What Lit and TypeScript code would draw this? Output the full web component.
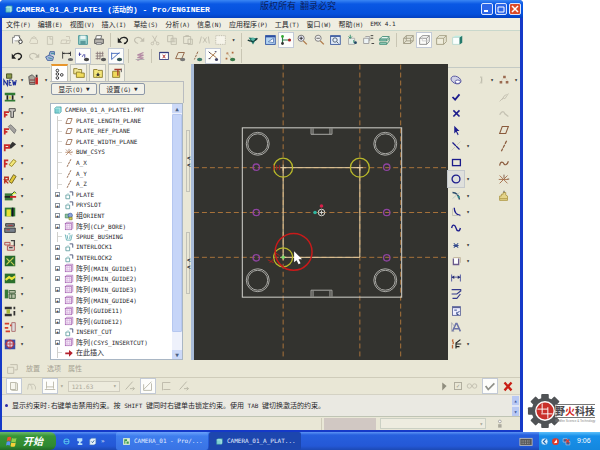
import { LitElement, html, svg, css, nothing } from "lit";
import { customElement, property } from "lit/decorators.js";
import { classMap } from "lit/directives/class-map.js";

const N = "#1c1c8c";
const B = "#8a5a3c";

/* Every glyph is drawn on a 16 x 16 grid. */
const glyphs: Record<string, unknown> = {
  newfile: svg`<path d="M3 12V5h2V3h6v3" fill="#fff" stroke="#777"/><path d="M5 9h5a2 2 0 0 1 0 4" fill="none" stroke="#999"/><circle cx="12" cy="10" r="2" fill="#fff" stroke="#222"/><path d="M10 4l3 4" stroke="#555"/>`,
  opendim: svg`<path d="M3 11l2-5h4l3 2v4H4z M5 6l3-2 3 2" fill="none" stroke="#c9c6b6"/>`,
  pagedim: svg`<path d="M5 4h6v9H5z M8 4v3h3" fill="none" stroke="#c5c2b2"/>`,
  erasedim: svg`<path d="M3 8h6l-1 4H2z M8 4h4v3 M9 9l4-1-1 4H8" fill="none" stroke="#c9c6b6"/>`,
  save: svg`<path d="M3 3h10v10H3z" fill="#9fd3cf" stroke="#3d8f92"/><path d="M5 3h6v4H5z" fill="#e8f6f4"/><path d="M5 9h6v4H5z" fill="#5a9a9c"/>`,
  print: svg`<path d="M5 3h6l-1 4H4z" fill="#fff" stroke="#666"/><path d="M3 7h10v5H3z" fill="#b5b2ac" stroke="#555"/><path d="M5 11h6v2H5z" fill="#ddd" stroke="#777"/>`,
  undo: svg`<path d="M4 8c3-5 10-3 9 1-1 2-2 3-4 3" fill="none" stroke="#222" stroke-width="1.6"/><path d="M2 5v6h5z" fill="#222"/>`,
  redo: svg`<path d="M12 8C9 3 2 5 3 9c1 2 2 3 4 3" fill="none" stroke="#c2bfb0" stroke-width="1.3"/><path d="M14 5v5H9z" fill="#c2bfb0"/>`,
  cut: svg`<path d="M5 3l5 8M10 3L6 11" stroke="#c0bdae"/><circle cx="5" cy="12" r="1.5" fill="none" stroke="#c0bdae"/><circle cx="11" cy="12" r="1.5" fill="none" stroke="#c0bdae"/>`,
  copy: svg`<path d="M3 3h6v7H3z M7 6h6v7H7z M9 8h3M9 10h3" fill="none" stroke="#bdbaab"/>`,
  paste: svg`<path d="M3 4h8v8H3z M8 7h5v6H8z M5 3h4" fill="none" stroke="#bdbaab"/>`,
  regen: svg`<path d="M5 4L3 12M7 5l4 6M11 5l-4 6M13 4l1 8" stroke="#bdbaab" fill="none"/>`,
  select: svg`<rect x="2" y="3" width="11" height="10" fill="#f6f4ea" stroke="#b4b1a2" stroke-dasharray="1 1"/>`,
  spin: svg`<path d="M3 5l9 1-4 7z" fill="#1f7a6d"/><path d="M2 8c3 2 8 2 11-2" stroke="#133" fill="none" stroke-width="1.5"/><circle cx="8" cy="7" r="2" fill="#57b6a5"/>`,
  repaint: svg`<rect x="3" y="3" width="11" height="10" fill="#b4d5f2" stroke="#2b4fa0"/><path d="M3 4h11" stroke="#2b4fa0" stroke-width="2"/><path d="M6 10l6-4v5z" fill="#fff" stroke="#5f7fb6"/>`,
  csyson: svg`<path d="M4 4v8M4 8h7" stroke="#2d7a4a" stroke-width="1.3"/><circle cx="4" cy="4" r="1.6" fill="#3a3"/><circle cx="4" cy="12" r="1.6" fill="#333"/><circle cx="12" cy="8" r="1.8" fill="#a22"/>`,
  zoomin: svg`<circle cx="7" cy="6" r="3.5" fill="#eef" stroke="#666"/><path d="M9.500 9l4 4" stroke="#b07a4a" stroke-width="1.6"/><path d="M5 6h4M7 4v4" stroke="#222"/>`,
  zoomout: svg`<circle cx="7" cy="6" r="3.500" fill="#eee" stroke="#777"/><path d="M9.500 9l4 4" stroke="#b07a4a" stroke-width="1.6"/><path d="M5 6h4" stroke="#555"/>`,
  refit: svg`<rect x="3" y="3" width="11" height="10" fill="#e5eefa" stroke="#34549c"/><path d="M3 4h11" stroke="#34549c"/><circle cx="8" cy="8" r="2.500" fill="none" stroke="#456"/><path d="M10 10l2 2" stroke="#456"/>`,
  reorient: svg`<path d="M4 6h7v7H4z" fill="#e3f0ea" stroke="#aaa"/><path d="M6 2v4M4 4l2 2 2-2M10 8v3h3" stroke="#2a8a6a" fill="none"/><circle cx="12" cy="11" r="1.500" fill="#246"/>`,
  viewlist: svg`<path d="M3 6h6v6H3z M5 4h5v5" fill="#edf4f6" stroke="#999"/><path d="M11 3h3M11 6h3M12 12h3" stroke="#333"/>`,
  layers: svg`<path d="M3 7l3-3h8l-3 3z" fill="#e4f6ee" stroke="#468e79"/><path d="M3 7h8v2H3zM3 11h8v2H3z" fill="#9fd8c4" stroke="#468e79"/><path d="M11 9l3-3M11 13l3-4V5" fill="none" stroke="#468e79"/>`,
  wire: svg`<path d="M3 6h8v6H3z M3 6l3-3h8l-3 3 M14 3v6l-3 3 M6 3v6h8 M6 9l-3 3" fill="none" stroke="#9b9780"/>`,
  hidden: svg`<path d="M3 6h8v7H3z M3 6l3-3h8l-3 3 M14 3v7l-3 3" fill="none" stroke="#888"/><path d="M6 3v6h8" fill="none" stroke="#ccc"/>`,
  nohidden: svg`<path d="M3 6h8v7H3z M3 6l3-3h8l-3 3 M14 3v7l-3 3" fill="#efeddc" stroke="#a09a7e"/>`,
  shaded: svg`<path d="M3 5l3-2h8l-3 2z" fill="#bfeee4"/><path d="M3 5h8v8H3z" fill="#fafffe" stroke="#b8d8d0"/><path d="M11 5l3-2v8l-3 2z" fill="#247a6c"/>`,
  teapot: svg`<path d="M3 9l4-2 5 2-1 4H5z M7 7l1-4h5v4" fill="#a8b8dc" stroke="#3f5f9c"/><path d="M9 5h4M6 10l4 1" stroke="#2f8a8a"/>`,
  dimson: svg`<path d="M3 3v8M12 3v5M3 5h9" stroke="#333" fill="none"/><path d="M3 5l2-1v2zM12 5l-2-1v2z" fill="#222"/><ellipse cx="12" cy="12" rx="3" ry="1.800" fill="#666"/>`,
  constr: svg`<path d="M4 4v4M3 6h3M7 9l2-3M10 6v4" stroke="#3a3a9c"/><ellipse cx="12" cy="12" rx="3" ry="2" fill="#444"/>`,
  gridon: svg`<path d="M3 5h9M3 8h9M3 11h5M5 3v9M8 3v9M11 3v5" stroke="#8a7a7a" fill="none"/><ellipse cx="12" cy="12" rx="3" ry="2" fill="#555"/>`,
  verton: svg`<path d="M3 4v8M3 12l9-8M3 5h9" stroke="#3a62b8" fill="none"/><ellipse cx="12" cy="12" rx="3" ry="2" fill="#355"/>`,
  stack: svg`<path d="M12 4L5 7h7L5 10h7l-7 3" fill="none" stroke="#b48aa4" stroke-width="1.300"/><path d="M3 12h10" stroke="#aaa"/>`,
  cross: svg`<rect x="3" y="4" width="10" height="8" fill="#fff" stroke="#333a7c"/><path d="M3 4h10" stroke="#333a7c" stroke-width="1.500"/><path d="M6.500 6.500l3 4M9.500 6.500l-3 4" stroke="#a22"/>`,
  planeon: svg`<path d="M6 4h7l-3 7H3z" fill="none" stroke="${B}"/><ellipse cx="11" cy="12" rx="3" ry="2" fill="#777"/>`,
  axison: svg`<path d="M9 3L5 12" stroke="${B}" stroke-dasharray="3 1"/><ellipse cx="11" cy="12" rx="3" ry="2" fill="#3a7a6a"/>`,
  pointon: svg`<path d="M4 4l8 6M11 4L4 11" stroke="#a06a3a"/><path d="M3 3l2 2M10 3h2M3 11h2" stroke="#335"/><circle cx="12" cy="12" r="1.800" fill="#446"/>`,
  csyspts: svg`<path d="M4 4h2v2H4zM10 3h2v2h-2zM3 10h2v2H3z" fill="#b0683c"/><path d="M5 5l5 6" stroke="#cb9"/><ellipse cx="11" cy="12" rx="3" ry="2" fill="#3a7a4a"/>`,

  ellip: svg`<ellipse cx="8" cy="8" rx="6" ry="4" transform="rotate(25 8 8)" fill="#cfd0e4" stroke="#5757a0"/><ellipse cx="10" cy="10" rx="3" ry="2" fill="#fff" stroke="#5757a0"/>`,
  done: svg`<path d="M4 8l3 3 5-6" fill="none" stroke="${N}" stroke-width="2"/>`,
  quit: svg`<path d="M5 5l7 7M12 5l-7 7" stroke="${N}" stroke-width="1.800"/>`,
  arrow: svg`<path d="M6 3v9l2-2 2 4 1-1-2-4h3z" fill="${N}"/>`,
  line: svg`<path d="M4 4l8 8" stroke="${N}" stroke-width="1.500"/><path d="M13 3L3 13" stroke="#c5c5b8"/>`,
  rect: svg`<rect x="4" y="4" width="9" height="7" fill="none" stroke="${N}" stroke-width="1.500"/>`,
  circle: svg`<circle cx="8" cy="8" r="4.500" fill="none" stroke="${N}" stroke-width="1.500"/>`,
  arc: svg`<path d="M4 4c4 0 7 3 8 8" stroke="#2a4a6c" stroke-width="1.600" fill="none"/><path d="M4 11l8-7" stroke="#b5c5c0"/><circle cx="11" cy="9" r="1.200" fill="#2a8a8a"/>`,
  fillet: svg`<path d="M6 3c0 5 2 8 7 9" stroke="${N}" stroke-width="1.500" fill="none"/><path d="M4 4v8h8" stroke="#c0c0b4" fill="none"/>`,
  spline: svg`<path d="M3 8c1-5 4-4 5 0s4 5 5 0" stroke="${N}" stroke-width="1.500" fill="none"/>`,
  point: svg`<path d="M5.500 6l5 5M10.500 6l-5 5M5 8.500h6" stroke="#334a8c" stroke-width="1.200"/>`,
  edge: svg`<path d="M5 5v7h6V5" fill="#fff" stroke="#6a5a8c" stroke-width="1.500"/><path d="M5 4h8v6" fill="none" stroke="#c0b49a"/>`,
  dim: svg`<path d="M3 4v8M13 4v8M3 7h10" stroke="#444a9c"/><path d="M3 7l3-2v4zM13 7l-3-2v4z" fill="#222a6c"/>`,
  modify: svg`<path d="M3 3h11M3 8h6l5-4M4 13h5l4-5" fill="none" stroke="#33398c" stroke-width="1.300"/>`,
  constrain: svg`<rect x="4" y="3" width="9" height="10" fill="#eef" stroke="#5a6298"/><path d="M4 4h9" stroke="#5a6298" stroke-width="1.500"/><path d="M6 7h3M9 11l3-3M9 9v3h2" stroke="#223a7c" fill="none"/>`,
  text: svg`<path d="M4 13L8 4h1l4 9M6 10h5" fill="none" stroke="#6a72a8" stroke-width="1.800"/><path d="M3 3v10h3M3 3l3 4" fill="none" stroke="#a9a9b4"/>`,
  trim: svg`<path d="M5 3c-3 1 2 4-1 5M4 9v4" stroke="#c06a3a" stroke-width="1.500" fill="none"/><path d="M8 13V7l5-4M8 8h6M8 11h4" stroke="#222" stroke-width="1.300" fill="none"/>`,
  dimcurve: svg`<path d="M8 4c3 2 2 6 0 8M10 4v8" stroke="#bdbaab" fill="none"/>`,
  points: svg`<path d="M7 3h3v3H7zM3 9h3v3H3zM10 9h3v3h-3z" fill="#9a6a50"/><path d="M7 6l-2 3M10 6l2 3" stroke="#dcb"/>`,
  dimaxis: svg`<path d="M3 13l4-4 2 1 4-6M6 11l2-4 3-2" stroke="#c0bdae" fill="none"/>`,
  dimwave: svg`<path d="M3 10c3-5 5-4 6-1l4 3" stroke="#c5c2b3" fill="none" stroke-width="1.500"/>`,
  plane: svg`<path d="M6 4h7l-3 8H3z" fill="none" stroke="${B}" stroke-width="1.200"/>`,
  axis: svg`<path d="M11 2L5 14" stroke="${B}" stroke-width="1.400" stroke-dasharray="4 1"/>`,
  curve: svg`<path d="M3 11c1-6 4-4 5-2s4 1 5-3" stroke="${B}" stroke-width="1.300" fill="none"/>`,
  csys: svg`<path d="M3 4l9 9M12 4l-9 9M2 8.500h11" stroke="#a06844"/><path d="M8 3v4M12 8h2" stroke="#754"/>`,
  analysis: svg`<path d="M3 8h2V6h2V4h3v3l2 1v5H3z" fill="#e4d48a" stroke="#b09a4a"/><path d="M3 11h9" stroke="#b09a4a"/><path d="M8 2v2" stroke="#444"/>`,

  part: svg`<path d="M3 5l2-2h8v8l-2 2H3z" fill="#7ed1d3" stroke="#39959c"/><path d="M3 5h8v8" fill="none" stroke="#d5f3f2"/>`,
  feature: svg`<path d="M3 8h6v6H3z" fill="none" stroke="#5a9a9c" stroke-width="1.300"/><path d="M9 3h5v6" fill="none" stroke="#555f80" stroke-width="1.600"/><path d="M5 6h3" stroke="#9cc"/>`,
  group: svg`<path d="M2 5h6v6H2z" fill="#8fc2a0" stroke="#357a52"/><circle cx="10" cy="7" r="3.500" fill="#8ca4dc" stroke="#33549c"/><path d="M8 10h5v4H8z" fill="#d7cf52" stroke="#777520"/>`,
  pattern: svg`<rect x="2" y="4" width="10" height="10" fill="#f6e9f8" stroke="#9a4ea8"/><path d="M2 4l2-2h10v10l-2 2" fill="none" stroke="#9a4ea8"/><path d="M5 4v10M9 4v10M2 7h10M2 11h10" stroke="#d4b0dc"/>`,
  bushing: svg`<path d="M2 4l2 9h7l2-9M5 5l1 6M10 5l-1 6M7 3h3" fill="none" stroke="#55a8ac" stroke-width="1.300"/>`,
  insert: svg`<path d="M2 7h6V3l6 5-6 6v-4H2z" fill="#b3202c"/>`,

  treetab: svg`<circle cx="5" cy="4" r="1.500" fill="#fff" stroke="#222"/><circle cx="5" cy="8" r="1.500" fill="#fff" stroke="#222"/><circle cx="5" cy="12.500" r="1.500" fill="#fff" stroke="#222"/><circle cx="10" cy="9" r="1.500" fill="#fff" stroke="#222"/>`,
  folders: svg`<path d="M2 3h4l1 1h4v5H2z" fill="#f3e89a" stroke="#8a7a2a"/><path d="M5 7h4l1 1h4v5H5z" fill="#f0dc5c" stroke="#8a7a2a"/>`,
  favs: svg`<path d="M3 4h4l1 1h5v8H3z" fill="#f5e77a" stroke="#8a7a2a"/><path d="M8 7l1 2h2l-2 1 1 2-2-1-2 1 1-2-2-1h2z" fill="#333"/>`,
  conn: svg`<path d="M3 6h8v7H3z" fill="#f1d95c" stroke="#8a7a2a"/><path d="M5 4h8M9 4v7" stroke="#a33a2a" stroke-width="1.500" fill="none"/><path d="M13 3v4" stroke="#555"/>`,

  emxnew: svg`<path d="M4 1h6v5H4z" fill="#8a9a4a" stroke="#444c20"/><path d="M1 14V8l4 6V8M7 8h3M7 11h2M7 14h3M7 8v6M11 8l1 6 1-4 1 4 1-6" stroke="#20309a" stroke-width="1.300" fill="none"/>`,
  emxcomp: svg`<path d="M2 4l4-2 3 3v8H3z" fill="#a9a59a" stroke="#555"/><path d="M11 5v8" stroke="#c22" stroke-width="3"/><path d="M11 2v3" stroke="#333" stroke-width="2"/><path d="M3 8h6M3 11h6" stroke="#733"/>`,
  emxbase: svg`<path d="M2 3h12v3H2zM2 11h12v2H2z" fill="#2f7a34"/><path d="M4 6h2v5H4zM10 6h2v5h-2z" fill="#222"/><path d="M7 7h2v3H7z" fill="#d6d23a"/>`,
  emxscrew: svg`<path d="M7 3h7v3h-2v7h-3V6H7z" fill="#c9c6c2" stroke="#444"/><path d="M2 13V7h5M2 10h3" stroke="#c82a2a" stroke-width="2" fill="none"/>`,
  emxpin: svg`<path d="M6 4l3-2 6 6-2 4z" fill="#a5a3a0" stroke="#777"/><path d="M2 13V7h5M2 10h3" stroke="#c82a2a" stroke-width="2" fill="none"/>`,
  emxbolt: svg`<path d="M6 9l5-6 4 3-6 5z" fill="#333"/><path d="M2 14V7h5v3H3" stroke="#c82a2a" stroke-width="2" fill="none"/>`,
  emxpenc: svg`<path d="M7 10l5-6 3 2-5 6z" fill="#f2e77a" stroke="#94811c"/><path d="M2 13V5h4M2 9h3" stroke="#c82a2a" stroke-width="2" fill="none"/>`,
  emxedit: svg`<path d="M7 11l5-8 3 2-5 8z" fill="#e2c83a" stroke="#6a5a1a"/><path d="M2 13V6h4v3H2l4 4" stroke="#b83020" stroke-width="1.600" fill="none"/>`,
  emxplate: svg`<path d="M2 5h9v8H2z" fill="#3a7a3a"/><path d="M8 8h7v2H8z" fill="#c22"/><path d="M9 7l4-4 2 2" fill="#df4" stroke="#242"/><path d="M2 9h6" stroke="#222" stroke-width="2"/>`,
  emxcool: svg`<path d="M2 3h12v10H2z" fill="#2f7a34"/><path d="M4 5h5v8H4z" fill="#e6e235"/><path d="M11 3v10" stroke="#112" stroke-width="2"/>`,
  emxmold: svg`<path d="M3 3h10v3H3zM2 8h12v5H2z" fill="#77808c" stroke="#333"/><path d="M4 10h4M6 5h5" stroke="#b33"/>`,
  emxejec: svg`<path d="M2 5h6v3H2zM5 9h8v5H5z" fill="#ddd6d0" stroke="#a44"/><path d="M9 3h4v6M7 11h4" stroke="#444" stroke-width="1.500" fill="none"/>`,
  emxslide: svg`<rect x="2" y="2" width="12" height="12" fill="#256a2a"/><path d="M4 12L12 4M4 5l3 3M9 9l4 4" stroke="#c9cf5a" stroke-width="1.300"/>`,
  emxlift: svg`<rect x="2" y="3" width="12" height="11" fill="#2b702e"/><path d="M3 10l4-3 3 2 4-3" stroke="#eae43c" stroke-width="2.500" fill="none"/>`,
  emxlatch: svg`<path d="M2 3h4v10H2z" fill="#357a38"/><path d="M7 4h7v3H7zM7 8h7v5H7z" fill="#b9c3a9" stroke="#3a5a38"/><path d="M10 8v5" stroke="#3a5a38"/>`,
  emxspec: svg`<path d="M2 3h8v3H2zM2 11h8v3H2z" fill="#333"/><path d="M4 6h4v5H4z" fill="#a5b83a"/><path d="M13 3v3M13 8v5" stroke="#333" stroke-width="2"/>`,
  emxdots: svg`<path d="M2 4h5M2 9h4M3 13h5M8 6h3" stroke="#d3402c" stroke-width="2"/><path d="M10 3h4v10h-4z" fill="#ddd" stroke="#a66"/>`,
  emxgear: svg`<rect x="2" y="3" width="12" height="11" fill="#3a4aa8"/><circle cx="8" cy="8" r="4" fill="#e0d4e4" stroke="#b03a4a" stroke-width="1.500"/><path d="M8 3v11M2 8h12" stroke="#b03a4a"/>`,

  place: svg`<path d="M3 6h7v7H3zM6 3h8v6h-3" fill="none" stroke="#bbb8a8"/>`,
  solid: svg`<path d="M4 4h6v8H4zM10 4l2 1v8H6l-2-1" fill="#f7f6ee" stroke="#b5b2a4"/>`,
  surf: svg`<path d="M3 12l1-6h6l2 3v3M5 6c3 1 3 4 3 6" fill="none" stroke="#c5c2b3"/>`,
  depth: svg`<path d="M4 3v8M12 3v8M2 12h12M4 9h8" fill="none" stroke="#bab7a8"/>`,
  flip: svg`<path d="M3 12l8-9M8 11h5M11 9l2 2-2 2" fill="none" stroke="#b5b2a4"/>`,
  remove: svg`<path d="M3 12L12 3M3 6v7h9V5" fill="none" stroke="#b5b2a4"/>`,
  thicken: svg`<path d="M4 13V4h9M5 12h8" fill="none" stroke="#bab7a8"/>`,
  play: svg`<path d="M6 4l5 4-5 5z" fill="#8f8d7e"/>`,
  glasses: svg`<circle cx="5" cy="8" r="2.500" fill="none" stroke="#c0bdae"/><circle cx="11" cy="8" r="2.500" fill="none" stroke="#c0bdae"/>`,
  okdim: svg`<path d="M3 8l3 4 7-7" fill="none" stroke="#8f9088" stroke-width="2"/>`,
  cancel: svg`<path d="M4 4l8 9M12 4l-8 9" stroke="#c81e14" stroke-width="2.600"/>`,
  lamp: svg`<path d="M6 9h5v5H6z" fill="#aaa89c"/><circle cx="8.500" cy="5" r="2" fill="#fff" stroke="#888"/>`,

  ie: svg`<circle cx="8" cy="8" r="4.500" fill="none" stroke="#4cc3ee" stroke-width="1.800"/><path d="M4 8h8" stroke="#8ee0fa"/>`,
  desk: svg`<path d="M4 2h9v5l-3 2v2h3v3H5v-3h2V8L4 7z" fill="#b8e0fa"/>`,
  media: svg`<path d="M3 5l3-3h8v9l-3 3H3z" fill="#e7f2fb" stroke="#4f7fb4"/><path d="M6 8l2 2 3-4" stroke="#258" fill="none" stroke-width="1.500"/>`,
  proe: svg`<rect x="2" y="2" width="12" height="12" fill="#dff0d0"/><path d="M4 4h5v3H6v5H4zM8 8h4v4H8z" fill="#3d9850"/>`,
  keyb: svg`<rect x="1" y="5" width="14" height="8" fill="#555" stroke="#bbb"/><path d="M3 8h10M3 10.500h10" stroke="#ccc" stroke-dasharray="1 1"/>`,
  expand: svg`<circle cx="8" cy="8" r="6" fill="#dcf2fd" stroke="#2a8ad8"/><path d="M10 4L6 8l4 4" fill="none" stroke="#1565b5" stroke-width="2"/>`,
  shield: svg`<rect x="2" y="2" width="12" height="12" rx="5" fill="#dc3c2c"/><path d="M5 11l5-7 1 6z" fill="#fff"/>`,
  net: svg`<path d="M2 3h7v6H2zM7 8h7v6H7z" fill="#4a5a8c" stroke="#c5d8f0"/><path d="M7 4l6 6M13 4l-6 6" stroke="#e23c2c" stroke-width="2"/>`,
};

const glyph = (name: string) =>
  html`<svg class="glyph" viewBox="0 0 16 16" aria-hidden="true">${glyphs[name]}</svg>`;

/* Chinese runs are set one step larger than the Latin beside them. */
const mixed = (s: string) =>
  s
    .split(/([\u3000-\u9fff]+)/)
    .filter(Boolean)
    .map((r) => (/[\u3000-\u9fff]/.test(r) ? html`<span class="han">${r}</span>` : r));

const base = css`
  * { box-sizing: border-box; }
  :host {
    display: block;
    font: 6px/10px "DejaVu Sans Mono", "Noto Sans CJK SC", monospace;
    color: #26262a;
  }
  button, select, input {
    font: inherit; color: inherit; margin: 0; padding: 0;
    border: 0; border-radius: 0; background: none;
  }
  .han { font-family: "Noto Sans CJK SC", sans-serif; font-size: 7px; }
  .glyph { display: block; width: 14px; height: 14px; flex: none; overflow: visible; }
`;

@customElement("tool-button")
class ToolButton extends LitElement {
  @property() icon = "";
  @property({ type: Boolean }) on = false;
  static styles = [
    base,
    css`
      :host { display: flex; justify-content: center; min-width: 0; height: 16px; }
      button { display: grid; place-items: center; width: 16px; height: 16px; }
      .on { background: #fdfdfb; border: 1px solid #c3cad6; }
    `,
  ];
  render() {
    return html`<button class=${classMap({ on: this.on })} aria-label=${this.icon}>${glyph(this.icon)}</button>`;
  }
}

@customElement("top-toolbars")
class TopToolbars extends LitElement {
  static styles = [
    base,
    css`
      :host { background: #e9e7d6; padding: 1px 55px 0 7px; border-top: 1px solid #c9d8cc; }
      .bar { display: flex; align-items: center; height: 16px; }
      .short { max-width: 236px; }
      tool-button { flex: 1; }
      .sep { width: 1px; height: 14px; margin: 0 3px; background: #c9c6b4; }
      .dot { width: 9px; text-align: center; }
    `,
  ];
  static rows = [
    "newfile opendim pagedim erasedim save print | undo redo cut copy paste regen select . | spin repaint csyson! zoomin zoomout refit reorient viewlist layers | wire hidden! nohidden shaded",
    "undo redo teapot dimson constr! gridon verton! | stack | cross planeon axison pointon! csyspts |",
  ];
  item(s: string) {
    if (s === "|") return html`<span class="sep"></span>`;
    if (s === ".") return html`<span class="dot">▾</span>`;
    return html`<tool-button icon=${s.replace("!", "")} ?on=${s.endsWith("!")}></tool-button>`;
  }
  render() {
    return TopToolbars.rows.map(
      (r, i) => html`<div class=${classMap({ bar: true, short: i === 1 })}>${r.split(" ").map((s) => this.item(s))}</div>`,
    );
  }
}

@customElement("side-toolbar")
class SideToolbar extends LitElement {
  @property() items = "";
  static styles = [
    base,
    css`
      :host { display: grid; grid-template-rows: repeat(17, 1fr); padding: 4px 0 8px; }
      .row { display: flex; align-items: center; min-height: 0; }
      .more { width: 8px; text-align: center; }
      .blank { width: 24px; }
      .on { background: #dfe0dc; outline: 1px solid #c4c8cc; }
    `,
  ];
  render() {
    return this.items.split(" ").map(
      (row) => html`<div class="row">
        ${row.split("/").map((s) =>
          s
            ? html`<tool-button class=${classMap({ on: s.endsWith("!") })} icon=${s.replace(/[.!]/g, "")}></tool-button>
                ${s.includes(".") ? html`<span class="more">▾</span>` : nothing}`
            : html`<span class="blank"></span>`,
        )}
      </div>`,
    );
  }
}

type Node = [icon: string, label: string, depth: number, closed?: boolean];

@customElement("model-tree")
class ModelTree extends LitElement {
  static nodes: Node[] = [
    ["part", "CAMERA_01_A_PLATE1.PRT", 0],
    ["plane", "PLATE_LENGTH_PLANE", 1],
    ["plane", "PLATE_REF_PLANE", 1],
    ["plane", "PLATE_WIDTH_PLANE", 1],
    ["csys", "BUW_CSYS", 1],
    ["axis", "A_X", 1],
    ["axis", "A_Y", 1],
    ["axis", "A_Z", 1],
    ["feature", "PLATE", 1, true],
    ["feature", "PRYSLOT", 1, true],
    ["group", "组ORIENT", 1, true],
    ["pattern", "阵列(CLP_BORE)", 1, true],
    ["bushing", "SPRUE_BUSHING", 1],
    ["feature", "INTERLOCK1", 1, true],
    ["feature", "INTERLOCK2", 1, true],
    ["pattern", "阵列(MAIN_GUIDE1)", 1, true],
    ["pattern", "阵列(MAIN_GUIDE2)", 1, true],
    ["pattern", "阵列(MAIN_GUIDE3)", 1, true],
    ["pattern", "阵列(MAIN_GUIDE4)", 1, true],
    ["pattern", "阵列(GUIDE11)", 1, true],
    ["pattern", "阵列(GUIDE12)", 1, true],
    ["feature", "INSERT_CUT", 1, true],
    ["pattern", "阵列(CSYS_INSERTCUT)", 1, true],
    ["insert", "在此插入", 1],
  ];
  static styles = [
    base,
    css`
      :host { display: flex; flex-direction: column; }
      .tabs { display: flex; gap: 2px; height: 17px; padding-left: 1px; flex: none; }
      .tab { display: grid; place-items: center; width: 17px; background: #f3f1e4; border: 1px solid #c2c4bc; border-bottom: 0; }
      .current { background: #fff; border-top: 2px solid #e8962c; }
      .head { display: flex; gap: 2px; padding: 1px; height: 22px; border-top: 1px solid #b9bcc0; border-right: 1px solid #b9bcc0; align-items: flex-start; flex: none; }
      .menu { display: flex; align-items: center; justify-content: center; gap: 3px; width: 46px; height: 12px; background: #f2f1e9; border: 1px solid #8d98a8; border-radius: 2px; }
      .body { flex: 1; display: flex; background: #fff; border: 1px solid #a9b6c4; margin-right: 1px; }
      .list { flex: 1; min-width: 0; display: grid; grid-template-rows: repeat(24, 1fr); margin: 0; padding: 1px 0; list-style: none; line-height: 8px; }
      .node { display: flex; align-items: center; gap: 2px; white-space: nowrap; padding-left: 2px; }
      .node .glyph { width: 10px; height: 10px; }
      .child { padding-left: 4px; }
      .stem { display: flex; align-items: center; align-self: stretch; width: 7px; flex: none; }
      .leaf { width: 5px; margin-left: 2px; border-left: 1px solid #d0d0cc; }
      .leaf::after { content: ""; width: 5px; border-top: 1px solid #d8d8d4; }
      .box { display: grid; place-items: center; width: 5px; height: 5px; border: 1px solid #8d96a0; font: 5px/5px "DejaVu Sans Mono", monospace; color: #000; }
      .bar { width: 10px; display: flex; flex-direction: column; background: #eef1fb; }
      .arrow { height: 9px; display: grid; place-items: center; background: #ccd9f8; color: #4d6185; }
      .thumb { flex: 1; margin: 1px 0 18px; background: #c6d5f8; border: 1px solid #b5c7f0; border-radius: 1px; }
    `,
  ];
  render() {
    return html`
      <div class="tabs" role="tablist">
        ${["treetab", "folders", "favs", "conn"].map(
          (t, i) => html`<button class=${classMap({ tab: true, current: i === 0 })} role="tab" aria-label=${t}>${glyph(t)}</button>`,
        )}
      </div>
      <div class="head">
        <button class="menu"><span>${mixed("显示(O)")}</span><span>▼</span></button>
        <button class="menu"><span>${mixed("设置(G)")}</span><span>▼</span></button>
      </div>
      <div class="body">
        <ul class="list">
          ${ModelTree.nodes.map(
            ([icon, label, depth, closed]) => html`<li class=${classMap({ node: true, child: depth > 0 })}>
              ${depth
                ? html`<span class=${classMap({ stem: true, leaf: !closed })}>${closed ? html`<span class="box">+</span>` : nothing}</span>`
                : nothing}
              ${glyph(icon)}<span>${mixed(label)}</span>
            </li>`,
          )}
        </ul>
        <div class="bar"><span class="arrow">▲</span><span class="thumb"></span><span class="arrow">▼</span></div>
      </div>
    `;
  }
}

@customElement("sketch-view")
class SketchView extends LitElement {
  static styles = css`
    :host { display: flex; background: #33332f; overflow: hidden; }
    svg { flex: 1; min-width: 0; }
    .datum { stroke: #a8733a; stroke-dasharray: 5 3; fill: none; }
    .solid { stroke: #d4d4ce; fill: none; }
    .bore { stroke: #a9a9a5; fill: none; }
    .sketch { stroke: #ead2a4; fill: none; }
    .circle { stroke: #b9b92a; fill: none; stroke-width: 1.3; }
    .hole { stroke: #8e44a0; fill: none; stroke-width: 1.3; }
    .live { stroke: #c81a1a; fill: none; stroke-width: 1.5; }
    .hint { stroke: #a8201c; fill: none; }
  `;
  render() {
    return html`<svg viewBox="194 64 255 296" role="img" aria-label="PLATE">
      ${[283.5, 360.5, 401.5].map((x) => svg`<path class="datum" d="M${x} 64V360" />`)}
      ${[167.5, 212.5, 257.5].map((y) => svg`<path class="datum" d="M194 ${y}H449" />`)}
      <rect class="solid" x="242.5" y="127.5" width="160" height="170" />
      <path class="bore" d="M311.500 128v6h21v-6M313.500 128v6M330.500 128v6M311.500 297v-6.500h21V297M313.500 297v-6M330.500 297v-6" />
      ${[258, 386].map((x) =>
        [143.5, 280.5].map((y) => svg`<circle class="bore" cx=${x} cy=${y} r="11.5" /><circle class="bore" cx=${x} cy=${y} r="10" />`),
      )}
      <path class="sketch" d="M283.500 167.500H360.500V257.500H283.500Z" />
      ${[256.5, 387.5].map((x) => [167, 212.5, 258].map((y) => svg`<circle class="hole" cx=${x} cy=${y} r="3.2" />`))}
      ${[[283.5, 167.5], [360.5, 167.5], [283.5, 257.5]].map(
        ([x, y]) => svg`<circle class="circle" cx=${x} cy=${y} r="9.5" /><path class="sketch" d="M${x - 3} ${y}h6M${x} ${y - 3}v6" />`,
      )}
      <path class="hint" d="M274 165v5M277 165v5M280 165v5M268 260l6 3M270 263l4-4M276 253l4 3" />
      <circle class="live" cx="294" cy="252" r="18.500" />
      <circle class="solid" cx="322" cy="212.500" r="3.300" />
      <path class="solid" d="M320 212.500h4M322 210.500v4" />
      <circle cx="322" cy="206" r="1.800" fill="#d81f4a" />
      <circle cx="315.500" cy="212.500" r="1.800" fill="#2fb5a0" />
      <circle cx="283.500" cy="257.500" r="1.800" fill="#7bd86a" />
      <path d="M294.500 251.500v11l2.500-2 2 4 2-1-2-4h3.500z" fill="#fff" />
    </svg>`;
  }
}

@customElement("task-bar")
class TaskBar extends LitElement {
  static styles = [
    base,
    css`
      :host { display: flex; height: 18px; background: linear-gradient(#5c94f4, #2760de 3px, #2458d6 14px, #1c49b4); color: #fff; }
      .start { display: flex; align-items: center; gap: 5px; width: 56px; padding-left: 6px; background: linear-gradient(#6cbb6a, #379437 4px, #2f8a31 14px, #226b26); border-radius: 0 6px 6px 0; color: #fff; }
      .start .glyph { width: 12px; height: 12px; }
      .word { font: italic bold 10px/14px "Noto Sans CJK SC", sans-serif; }
      .quick { display: flex; align-items: center; gap: 4px; padding: 0 6px; width: 60px; }
      .quick .glyph, .task .glyph, .tray .glyph { width: 9px; height: 9px; }
      .task { display: flex; align-items: center; gap: 3px; width: 92px; margin-right: 1px; padding-left: 6px; background: linear-gradient(#6ba3fa, #3f7eee 4px, #3973e4); color: #e3edff; border-radius: 2px; }
      .active { background: #1c46ae; }
      .space { flex: 1; }
      .ime { align-self: center; width: 20px; }
      .tray { display: flex; align-items: center; gap: 2px; width: 61px; padding-left: 1px; background: linear-gradient(#5cc0fa, #1890ea 4px, #1487de); }
      .clock { margin-left: 4px; font: 7px/10px "Liberation Sans", sans-serif; }
    `,
  ];
  render() {
    return html`
      <button class="start">
        <svg class="glyph" viewBox="0 0 16 16" aria-hidden="true">
          <path d="M2 3c2-1 4-1 5 0L6 8C4 7 3 7 1 8z" fill="#e8562c" /><path d="M8 4c2 1 4 1 6 0l-1 5c-2 1-4 1-6 0z" fill="#8fd04c" />
          <path d="M1 9c2-1 3-1 5 0l-1 5c-2-1-3-1-5 0z" fill="#5a94f0" /><path d="M7 10c2 1 4 1 6 0l-1 5c-2 1-4 1-6 0z" fill="#f5cf3a" />
        </svg>
        <span class="word">开始</span>
      </button>
      <div class="quick">${glyph("ie")}${glyph("desk")}${glyph("media")}<span>»</span></div>
      <button class="task">${glyph("proe")}<span>CAMERA_01 - Pro/...</span></button>
      <button class="task active">${glyph("part")}<span>CAMERA_01_A_PLAT...</span></button>
      <span class="space"></span>
      <span class="ime">${glyph("keyb")}</span>
      <div class="tray">${glyph("expand")}${glyph("shield")}${glyph("net")}<span class="clock">9:06</span></div>
    `;
  }
}

@customElement("brand-mark")
class BrandMark extends LitElement {
  static styles = css`
    :host { display: flex; align-items: center; }
    .gear { width: 36px; height: 36px; flex: none; }
    .words { flex: none; margin-left: -8px; display: flex; flex-direction: column; z-index: 1; padding-top: 6px; }
    .name { font: bold 10px/12px "Noto Sans CJK SC", sans-serif; color: #48484c; background: #ffffffb0; border-top: 1px solid #777; border-bottom: 1px solid #777; }
    .fire { color: #d3261e; }
    .sub { font: 3px/6px "Liberation Sans", sans-serif; color: #888; }
  `;
  render() {
    return html`
      <svg class="gear" viewBox="-19 -19 38 38" aria-hidden="true">
        ${[0, 45, 90, 135].map((a) => svg`<rect x="-4" y="-18" width="8" height="36" rx="1" fill="#505356" transform="rotate(${a})" />`)}
        <circle r="14" fill="#505356" /><circle r="10.500" fill="#fff" /><circle r="9" fill="#c9302a" />
        <path d="M-8 -2H3M-4 3H8M-3 -8V2M3 -4V8" stroke="#fff" />
      </svg>
      <div class="words">
        <span class="name">野<span class="fire">火</span>科技</span>
        <span class="sub">Wildfire Science &amp; Technology</span>
      </div>
    `;
  }
}

@customElement("app-root")
class AppRoot extends LitElement {
  static menus = ["文件(F)", "编辑(E)", "视图(V)", "插入(I)", "草绘(S)", "分析(A)", "信息(N)", "应用程序(P)", "工具(T)", "窗口(W)", "帮助(H)", "EMX 4.1"];
  static emx = "emxnew./emxcomp. emxbase. emxscrew. emxpin. emxbolt. emxpenc. emxedit. emxplate. emxcool. emxmold. emxejec. emxslide. emxlift. emxlatch. emxspec. emxdots. emxgear.";
  static sketcher = "ellip done quit arrow line. rect circle.! arc. fillet. spline point. edge. dim modify constrain text trim.";
  static datums = "dimcurve./points. /dimaxis /dimwave /plane /axis /curve /csys /analysis";
  static styles = [
    base,
    css`
      :host { display: flex; flex-direction: column; min-height: 100vh; background: #fff; }
      .desk { flex: 1; display: flex; }
      .win { position: relative; flex: 1; min-width: 0; display: flex; flex-direction: column; padding: 0 3px 2px 2px; background: #1539c8; border-radius: 4px 4px 0 0; }
      .title { display: flex; align-items: center; height: 18px; padding: 0 2px; gap: 2px; margin: 0 -3px 0 -2px; border-radius: 4px 4px 0 0; background: linear-gradient(#3a86f4, #0a58e4 4px, #0450dc 14px, #0340c0); color: #fff; }
      .title .glyph { width: 10px; height: 10px; margin-left: 2px; }
      .caption { flex: 1; font: bold 8px/12px "Liberation Mono", "Noto Sans CJK SC", monospace; white-space: nowrap; }
      .mark { position: absolute; top: 0; left: 260px; font: 9px/11px "Noto Sans CJK SC", sans-serif; color: #0b1f5c; white-space: pre; }
      .ctl { display: grid; place-items: center; width: 12px; height: 12px; border: 1px solid #dbe6ff; border-radius: 2px; background: #2d66e8; }
      .close { background: #dc4a28; }
      .ctl .glyph { width: 8px; height: 8px; margin: 0; }
      .menus { display: flex; gap: 7px; height: 12px; padding: 1px 4px; background: #f0eee2; white-space: nowrap; }
      .work { flex: 1; display: flex; background: #e9e7d6; }
      .emx { width: 48px; }
      .left, .right { display: flex; margin-top: 3px; border-top: 1px solid #c4cac4; }
      .tree { width: 134px; }
      .sash { display: flex; flex-direction: column; justify-content: space-evenly; width: 10px; padding: 25px 1px 25px 2px; border-right: 3px solid #a9bcd8; }
      .grip { display: grid; place-items: center; height: 62px; border: 1px solid #c2c2b8; color: #0d1626; font-weight: bold; line-height: 7px; }
      .view { flex: 1; }
      .right { width: 72px; justify-content: space-between; flex: none; }
      .dash { background: #e9e7d6; color: #a5a292; }
      .slots { display: flex; align-items: center; gap: 7px; height: 17px; padding-left: 3px; }
      .opts { display: flex; align-items: center; height: 17px; border-top: 1px solid #cfccba; padding: 0 4px; gap: 2px; }
      .depth { width: 52px; height: 11px; padding-left: 3px; border: 1px solid #cfccbe; background: #edebdd; appearance: none; color: #aaa798; }
      .grow { flex: 1; }
      .tick { appearance: none; display: grid; place-items: center; width: 8px; height: 8px; border: 1px solid #b0ad9e; }
      .tick:checked::before { content: "✓"; line-height: 6px; color: #8f8d80; }
      .log { display: flex; height: 22px; background: #eae9e2; border-top: 1px solid #d4d2c4; align-items: center; padding: 0 1px 0 3px; white-space: nowrap; }
      .bullet { width: 3px; height: 3px; border-radius: 50%; background: #2b2ba8; margin-right: 4px; }
      .prompt { flex: 1; }
      .spin { display: flex; flex-direction: column; width: 7px; height: 20px; justify-content: space-between; background: #dfe6f8; color: #35579c; }
      .nudge { display: grid; place-items: center; height: 9px; background: #b9c9f4; }
      .status { display: flex; align-items: center; gap: 2px; height: 14px; background: #e9e7d6; border-top: 1px solid #bfc4b4; }
      .pane { flex: 1; height: 12px; border-right: 1px solid #cfccba; }
      .busy { width: 52px; height: 12px; background: #d1c8c3; }
      .field { display: grid; align-items: center; margin-left: 2px; }
      .field > * { grid-area: 1 / 1; }
      .field::after { content: "▾"; grid-area: 1 / 1; justify-self: end; padding-right: 3px; color: #a5a292; pointer-events: none; }
      .filter { width: 106px; height: 11px; border: 1px solid #cbd0c4; background: #eeece0; appearance: none; }
      .lamp { width: 32px; padding-left: 6px; }
      .lamp .glyph { width: 11px; height: 11px; }
      .gutter { display: flex; flex-direction: column; justify-content: flex-end; width: 77px; padding-bottom: 3px; padding-left: 4px; }
    `,
  ];
  render() {
    return html`
      <div class="desk">
        <main class="win">
          <header class="title">
            ${glyph("part")}
            <span class="caption">${mixed("CAMERA_01_A_PLATE1 (活动的) - Pro/ENGINEER")}</span>
            <button class="ctl" aria-label="minimize"><svg class="glyph" viewBox="0 0 8 8"><path d="M1 6h4" stroke="#fff" stroke-width="2" /></svg></button>
            <button class="ctl" aria-label="maximize"><svg class="glyph" viewBox="0 0 8 8"><path d="M1 2h6v5H1z" fill="none" stroke="#fff" /></svg></button>
            <button class="ctl close" aria-label="close"><svg class="glyph" viewBox="0 0 8 8"><path d="M1 1l6 6M7 1L1 7" stroke="#fff" stroke-width="1.500" /></svg></button>
          </header>
          <span class="mark">版权所有  翻录必究</span>
          <nav class="menus">${AppRoot.menus.map((m) => html`<button>${mixed(m)}</button>`)}</nav>
          <top-toolbars></top-toolbars>
          <section class="work">
            <div class="left"><side-toolbar class="emx" items=${AppRoot.emx}></side-toolbar></div>
            <model-tree class="tree"></model-tree>
            <div class="sash"><span class="grip">&lt;<br />&lt;</span><span class="grip">&lt;<br />&lt;</span></div>
            <sketch-view class="view"></sketch-view>
            <div class="right">
              <side-toolbar items=${AppRoot.sketcher}></side-toolbar>
              <side-toolbar items=${AppRoot.datums}></side-toolbar>
            </div>
          </section>
          <section class="dash">
            <div class="slots">${glyph("place")}<button>${mixed("放置")}</button><button>${mixed("选项")}</button><button>${mixed("属性")}</button></div>
            <div class="opts">
              <tool-button icon="solid" on></tool-button><tool-button icon="surf"></tool-button><tool-button icon="depth" on></tool-button><span>▾</span>
              <div class="field"><select class="depth" aria-label="depth"><option>121.63</option></select></div>
              <tool-button icon="flip"></tool-button><tool-button icon="remove" on></tool-button><tool-button icon="thicken"></tool-button><tool-button icon="flip"></tool-button>
              <span class="grow"></span>
              <tool-button icon="play"></tool-button>
              <input class="tick" type="checkbox" checked aria-label="preview" />
              <tool-button icon="glasses"></tool-button><tool-button icon="okdim" on></tool-button><tool-button icon="cancel"></tool-button>
            </div>
          </section>
          <section class="log">
            <span class="bullet"></span>
            <span class="prompt">${mixed("显示约束时:右键单击禁用约束。按 SHIFT 键同时右键单击锁定约束。使用 TAB 键切换激活的约束。")}</span>
            <span class="spin"><span class="nudge">▴</span><span class="nudge">▾</span></span>
          </section>
          <footer class="status">
            <span class="pane"></span><span class="busy"></span>
            <div class="field"><select class="filter" aria-label="filter"><option></option></select></div>
            <span class="lamp">${glyph("lamp")}</span>
          </footer>
        </main>
        <aside class="gutter"><brand-mark></brand-mark></aside>
      </div>
      <task-bar></task-bar>
    `;
  }
}
